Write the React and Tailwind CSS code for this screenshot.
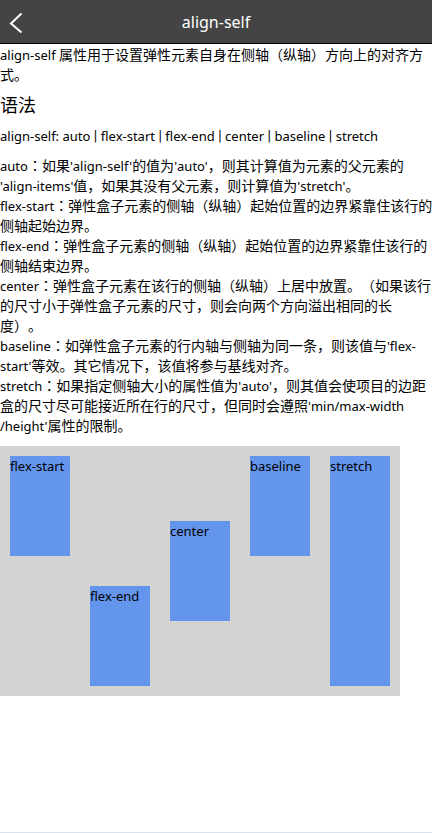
const intro = ["align-self 属性用于设置弹性元素自身在侧轴（纵轴）方向上的对齐方", "式。"];

const terms = [
  ["auto：如果'align-self'的值为'auto'，则其计算值为元素的父元素的", "'align-items'值，如果其没有父元素，则计算值为'stretch'。"],
  ["flex-start：弹性盒子元素的侧轴（纵轴）起始位置的边界紧靠住该行的", "侧轴起始边界。"],
  ["flex-end：弹性盒子元素的侧轴（纵轴）起始位置的边界紧靠住该行的", "侧轴结束边界。"],
  ["center：弹性盒子元素在该行的侧轴（纵轴）上居中放置。（如果该行", "的尺寸小于弹性盒子元素的尺寸，则会向两个方向溢出相同的长", "度）。"],
  ["baseline：如弹性盒子元素的行内轴与侧轴为同一条，则该值与'flex-", "start'等效。其它情况下，该值将参与基线对齐。"],
  ["stretch：如果指定侧轴大小的属性值为'auto'，则其值会使项目的边距", "盒的尺寸尽可能接近所在行的尺寸，但同时会遵照'min/max-width", "/height'属性的限制。"],
];

const boxes = [
  ["flex-start", "self-start h-[100px]"],
  ["flex-end", "self-end h-[100px]"],
  ["center", "self-center h-[100px]"],
  ["baseline", "self-baseline h-[100px]"],
  ["stretch", "self-stretch"],
];

// Latin words, separators and the centred colon each have their own face.
function runClass(run) {
  if (run === " | ") return "font-['Roboto',sans-serif] text-sm leading-none";
  if (run === "：") return "font-['Noto_Sans_CJK_TC',sans-serif] leading-none";
  if (/^[!-~ ]/.test(run)) return "text-[13px] leading-none";
  return "leading-none";
}

function Mixed({ text }) {
  const runs = text.split(/( \| |：|[!-{}~]+(?: (?!\|)[!-{}~]*)*)/).filter(Boolean);
  return runs.map((run, i) => (
    <span key={i} className={runClass(run)}>{run}</span>
  ));
}

function Lines({ lines }) {
  return lines.map((line) => (
    <span key={line} className="block whitespace-nowrap"><Mixed text={line} /></span>
  ));
}

export default function App() {
  return (
    <div className="flex min-h-screen flex-col overflow-x-hidden border-b border-[#d9e0ee] bg-white font-['Noto_Sans','Noto_Sans_CJK_SC',sans-serif] text-sm leading-5 text-black [text-spacing-trim:space-all]">
      <header className="grid h-11 grid-cols-[44px_1fr_44px] items-center border-b border-black bg-[#444] text-white">
        <button type="button" aria-label="返回" className="flex h-full items-center pl-2">
          <svg width="16" height="22" viewBox="0 0 16 22" fill="none" stroke="currentColor" strokeWidth="2">
            <path d="M13.5 2.500 3 12.500l10.500 9" />
          </svg>
        </button>
        <h1 className="text-center text-base">align-self</h1>
      </header>
      <main className="pt-px">
        <p><Lines lines={intro} /></p>
        <h2 className="mt-2 text-lg leading-6">语法</h2>
        <p className="mt-[9px]"><Mixed text="align-self: auto | flex-start | flex-end | center | baseline | stretch" /></p>
        <div className="mt-2.5">
          {terms.map((lines) => (
            <p key={lines[0]}><Lines lines={lines} /></p>
          ))}
        </div>
        <div className="mt-2.5 flex h-[250px] w-[400px] bg-[#d3d3d3] text-[13px]">
          {boxes.map(([name, style]) => (
            <div key={name} className={"m-2.5 w-[60px] bg-[#6495ed] " + style}>{name}</div>
          ))}
        </div>
      </main>
    </div>
  );
}
